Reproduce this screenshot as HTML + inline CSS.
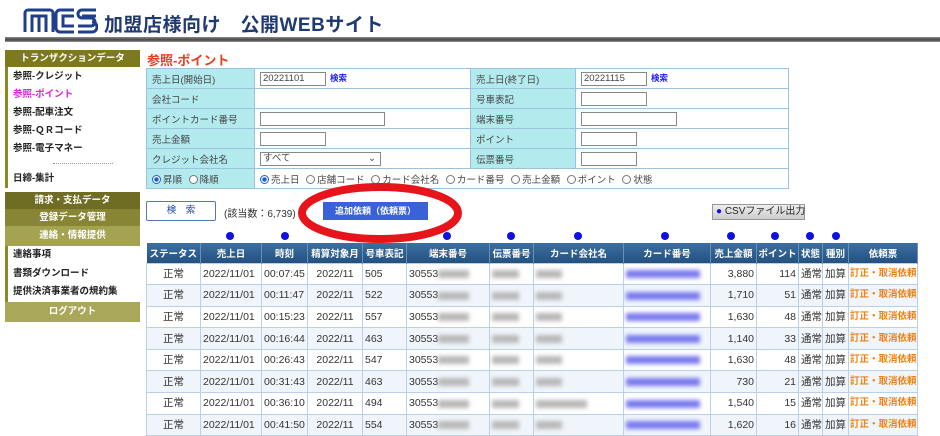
<!DOCTYPE html>
<html><head><meta charset="utf-8"><style>
*{box-sizing:border-box;margin:0;padding:0}
body{width:940px;height:436px;overflow:hidden;background:#fff;font-family:"Liberation Sans","Noto Sans CJK JP",sans-serif;font-size:10px;color:#222;position:relative}
.a{position:absolute}
.hdr{left:5px;top:37px;width:935px;height:5px;background:linear-gradient(#888,#444 60%,#999)}
.side{left:5px;top:50px;width:135px}
.sh{color:#fff;font-weight:bold;text-align:center;font-size:9.5px;line-height:17px}
.si{background:#fff;border-left:3px solid #8a8a25;padding-left:5px;font-weight:bold;font-size:9.5px}
table{border-collapse:collapse}
.f td{border:1px solid #9cc3dd;height:20px;padding:0 5px;font-size:9.5px;color:#444;white-space:nowrap}
.f td.l{background:#b3eaee}
.inp{display:inline-block;border:1px solid #888;height:14px;vertical-align:middle;background:#fff;font-size:9.5px;padding-left:2px;line-height:12px}
.k{color:#1a1aff;font-weight:bold;font-size:8.5px;margin-left:4px}
.rb{display:inline-block;width:9px;height:9px;border:1px solid #777;border-radius:50%;vertical-align:-1px;margin-right:2px;background:#fff}
.rb.on{background:radial-gradient(#1a5fd0 40%,#fff 50%);border-color:#1a5fd0}
.d{table-layout:fixed}
.d th{background:linear-gradient(#3b6fa3,#24517f);color:#fff;font-size:9.5px;height:20px;border-right:1px solid #6b8fb5;font-weight:bold;white-space:nowrap;overflow:hidden;padding:0;vertical-align:middle}
.d td{border:1px solid #b9d0e6;height:21.6px;font-size:10.5px;padding:0 2px;color:#333;white-space:nowrap;overflow:hidden;vertical-align:middle;line-height:20px}
.d tr:nth-child(odd) td{background:#f0f5fb}
.bl{display:inline-block;height:8px;background:#b8b8b8;filter:blur(2px);width:70%;vertical-align:middle}
.bb{display:inline-block;height:8px;background:#7a7aee;filter:blur(2px);width:90%;vertical-align:middle}
.d td.o{color:#f08010;font-weight:bold;font-size:9.5px;padding:0 1px}
.dot{position:absolute;top:232px;width:8px;height:8px;border-radius:50%;background:#1010e0}
</style></head><body>
<svg class="a" style="left:22px;top:7px" width="76" height="27" viewBox="0 0 76 27" fill="none" stroke="#1f3f8a" stroke-width="3">
<path d="M3 25V6a3 3 0 0 1 3-3h22a3 3 0 0 1 3 3v19M10 25V9h14v16M17 9v16"/>
<path d="M52 3H38a4 4 0 0 0-4 4v14a4 4 0 0 0 4 4h14M52 9H41v10h11"/>
<path d="M74 3H60a4 4 0 0 0 0 8h9a4 4 0 0 1 0 8H56M74 9H60M56 25h14a5 5 0 0 0 0-10"/>
</svg>
<div class="a" style="left:104px;top:10px;font-size:19px;font-weight:bold;color:#1f3a70;letter-spacing:0.5px">加盟店様向け　公開WEBサイト</div>
<div class="a hdr"></div>
<div class="a side">
<div class="sh" style="background:#7c7a1c">トランザクションデータ</div>
<div class="si" style="line-height:18px;padding-top:1px">参照-クレジット<br><span style="color:#e020e0">参照-ポイント</span><br>参照-配車注文<br>参照-ＱＲコード<br>参照-電子マネー<br><span style="display:block;width:60px;border-top:1px dotted #999;margin:5px 0 6px 40px"></span>日締-集計</div>
<div class="sh" style="background:#6f6c24;margin-top:4px">請求・支払データ</div>
<div class="sh" style="background:#888634">登録データ管理</div>
<div class="sh" style="background:#a4a351;line-height:20px">連絡・情報提供</div>
<div class="si" style="line-height:18.5px">連絡事項<br>書類ダウンロード<br>提供決済事業者の規約集</div>
<div class="sh" style="background:#a9a75a;line-height:20px">ログアウト</div>
</div>
<div class="a" style="left:147px;top:50px;color:#e8401c;font-size:13px;font-weight:bold">参照-ポイント</div>
<table class="a f" style="left:146px;top:68px;width:643px">
<tr><td class="l" style="width:108px">売上日(開始日)</td><td style="width:216px"><span class="inp" style="width:66px">20221101</span><span class="k">検索</span></td><td class="l" style="width:105px">売上日(終了日)</td><td><span class="inp" style="width:66px">20221115</span><span class="k">検索</span></td></tr>
<tr><td class="l">会社コード</td><td></td><td class="l">号車表記</td><td><span class="inp" style="width:66px"></span></td></tr>
<tr><td class="l">ポイントカード番号</td><td><span class="inp" style="width:125px"></span></td><td class="l">端末番号</td><td><span class="inp" style="width:96px"></span></td></tr>
<tr><td class="l">売上金額</td><td><span class="inp" style="width:66px"></span></td><td class="l">ポイント</td><td><span class="inp" style="width:56px"></span></td></tr>
<tr><td class="l">クレジット会社名</td><td><span class="inp" style="width:121px">すべて<span style="float:right;margin-right:4px">⌄</span></span></td><td class="l">伝票番号</td><td><span class="inp" style="width:56px"></span></td></tr>
<tr><td class="l" style="height:18px"><span class="rb on"></span>昇順 <span class="rb" style="margin-left:4px"></span>降順</td><td colspan="3"><span class="rb on"></span>売上日 <span class="rb" style="margin-left:4px"></span>店舗コード <span class="rb" style="margin-left:4px"></span>カード会社名 <span class="rb" style="margin-left:4px"></span>カード番号 <span class="rb" style="margin-left:4px"></span>売上金額 <span class="rb" style="margin-left:4px"></span>ポイント <span class="rb" style="margin-left:4px"></span>状態</td></tr>
</table>
<div class="a" style="left:146px;top:201px;width:70px;height:20px;border:1px solid #5577bb;border-radius:2px;background:#fff;color:#2244aa;text-align:center;line-height:18px;font-size:9.5px">検　索</div>
<div class="a" style="left:224px;top:205px;font-size:10px;color:#333">(該当数：6,739)</div>
<div class="a" style="left:323px;top:202px;width:105px;height:18px;background:#3a62d8;color:#fff;text-align:center;line-height:18px;font-size:9px;font-weight:bold">追加依頼（依頼票）</div>
<svg class="a" style="left:296px;top:182px" width="170" height="64"><ellipse cx="84" cy="31" rx="78" ry="26" fill="none" stroke="#e8141c" stroke-width="8"/></svg>
<div class="a" style="left:712px;top:204px;width:93px;height:16px;border:1px solid #999;background:linear-gradient(#eee,#ccc);font-size:10px;line-height:14px;padding-left:3px;white-space:nowrap"><span style="color:#1010e0">●</span> CSVファイル出力</div>
<div class="dot" style="left:226px"></div><div class="dot" style="left:281px"></div><div class="dot" style="left:443px"></div><div class="dot" style="left:507px"></div><div class="dot" style="left:574px"></div><div class="dot" style="left:661px"></div><div class="dot" style="left:727px"></div><div class="dot" style="left:771px"></div><div class="dot" style="left:806px"></div><div class="dot" style="left:832px"></div>
<table class="a d" style="left:146px;top:243px;width:772px">
<colgroup><col style="width:54px"><col style="width:61px"><col style="width:46px"><col style="width:55px"><col style="width:44px"><col style="width:83px"><col style="width:44px"><col style="width:90px"><col style="width:87px"><col style="width:46px"><col style="width:42px"><col style="width:24px"><col style="width:26px"><col></colgroup>
<tr><th>ステータス</th><th>売上日</th><th>時刻</th><th>精算対象月</th><th>号車表記</th><th>端末番号</th><th>伝票番号</th><th>カード会社名</th><th>カード番号</th><th>売上金額</th><th>ポイント</th><th>状態</th><th>種別</th><th>依頼票</th></tr>
<tr><td align=center>正常</td><td>2022/11/01</td><td>00:07:45</td><td align=center>2022/11</td><td>505</td><td>30553<span class="bl" style="width:40%"></span></td><td><span class="bl"></span></td><td><span class="bl" style="width:30%"></span></td><td><span class="bb"></span></td><td align=right>3,880</td><td align=right>114</td><td>通常</td><td>加算</td><td class="o">訂正・取消依頼</td></tr>
<tr><td align=center>正常</td><td>2022/11/01</td><td>00:11:47</td><td align=center>2022/11</td><td>522</td><td>30553<span class="bl" style="width:40%"></span></td><td><span class="bl"></span></td><td><span class="bl" style="width:30%"></span></td><td><span class="bb"></span></td><td align=right>1,710</td><td align=right>51</td><td>通常</td><td>加算</td><td class="o">訂正・取消依頼</td></tr>
<tr><td align=center>正常</td><td>2022/11/01</td><td>00:15:23</td><td align=center>2022/11</td><td>557</td><td>30553<span class="bl" style="width:40%"></span></td><td><span class="bl"></span></td><td><span class="bl" style="width:30%"></span></td><td><span class="bb"></span></td><td align=right>1,630</td><td align=right>48</td><td>通常</td><td>加算</td><td class="o">訂正・取消依頼</td></tr>
<tr><td align=center>正常</td><td>2022/11/01</td><td>00:16:44</td><td align=center>2022/11</td><td>463</td><td>30553<span class="bl" style="width:40%"></span></td><td><span class="bl"></span></td><td><span class="bl" style="width:30%"></span></td><td><span class="bb"></span></td><td align=right>1,140</td><td align=right>33</td><td>通常</td><td>加算</td><td class="o">訂正・取消依頼</td></tr>
<tr><td align=center>正常</td><td>2022/11/01</td><td>00:26:43</td><td align=center>2022/11</td><td>547</td><td>30553<span class="bl" style="width:40%"></span></td><td><span class="bl"></span></td><td><span class="bl" style="width:30%"></span></td><td><span class="bb"></span></td><td align=right>1,630</td><td align=right>48</td><td>通常</td><td>加算</td><td class="o">訂正・取消依頼</td></tr>
<tr><td align=center>正常</td><td>2022/11/01</td><td>00:31:43</td><td align=center>2022/11</td><td>463</td><td>30553<span class="bl" style="width:40%"></span></td><td><span class="bl"></span></td><td><span class="bl" style="width:30%"></span></td><td><span class="bb"></span></td><td align=right>730</td><td align=right>21</td><td>通常</td><td>加算</td><td class="o">訂正・取消依頼</td></tr>
<tr><td align=center>正常</td><td>2022/11/01</td><td>00:36:10</td><td align=center>2022/11</td><td>494</td><td>30553<span class="bl" style="width:40%"></span></td><td><span class="bl"></span></td><td><span class="bl" style="width:60%"></span></td><td><span class="bb"></span></td><td align=right>1,540</td><td align=right>15</td><td>通常</td><td>加算</td><td class="o">訂正・取消依頼</td></tr>
<tr><td align=center>正常</td><td>2022/11/01</td><td>00:41:50</td><td align=center>2022/11</td><td>554</td><td>30553<span class="bl" style="width:40%"></span></td><td><span class="bl"></span></td><td><span class="bl" style="width:30%"></span></td><td><span class="bb"></span></td><td align=right>1,620</td><td align=right>16</td><td>通常</td><td>加算</td><td class="o">訂正・取消依頼</td></tr>
</table>
</body></html>
